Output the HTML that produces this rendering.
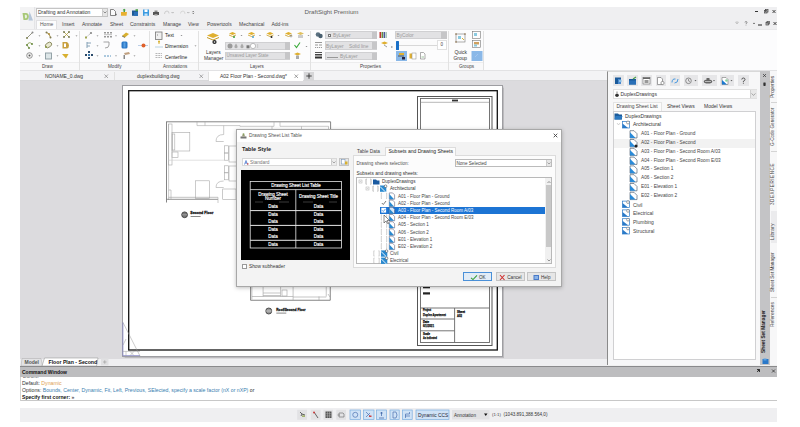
<!DOCTYPE html>
<html><head><meta charset="utf-8">
<style>
*{margin:0;padding:0;box-sizing:border-box}
html,body{width:800px;height:427px;overflow:hidden;background:#fff;font-family:"Liberation Sans",sans-serif;color:#222}
.a{position:absolute}
#app{position:absolute;left:20px;top:7px;width:757px;height:415px;background:#f0f0f0;overflow:hidden}
.t{position:absolute;white-space:nowrap;font-size:6px;line-height:1}
</style></head><body>
<div id="app"></div>

<!-- ===== RIBBON ===== -->
<div class="a" style="left:20px;top:28.5px;width:757px;height:42px;background:#fcfcfd;border-top:1px solid #e8e8ea"></div>
<div class="a" style="left:20px;top:62px;width:464px;height:8px;background:#f9f9fa;border-top:1px solid #ededee"></div>
<div class="a" style="left:20px;top:70px;width:757px;height:1px;background:#e2e2e4"></div>
<!-- panel separators -->
<div class="a" style="left:79px;top:31px;width:1px;height:39px;background:#e2e2e2"></div>
<div class="a" style="left:149px;top:31px;width:1px;height:39px;background:#e2e2e2"></div>
<div class="a" style="left:198px;top:31px;width:1px;height:39px;background:#e2e2e2"></div>
<div class="a" style="left:310px;top:31px;width:1px;height:39px;background:#e2e2e2"></div>
<div class="a" style="left:448px;top:31px;width:1px;height:39px;background:#e2e2e2"></div>
<div class="a" style="left:483px;top:31px;width:1px;height:39px;background:#e2e2e2"></div>
<!-- panel labels -->
<div class="t" style="left:42px;top:65.4px;font-size:4.6px;color:#444">Draw</div>
<div class="t" style="left:108px;top:65.4px;font-size:4.6px;color:#444">Modify</div>
<div class="t" style="left:163px;top:65.4px;font-size:4.6px;color:#444">Annotations</div>
<div class="t" style="left:250px;top:65.4px;font-size:4.6px;color:#444">Layers</div>
<div class="t" style="left:360px;top:65.4px;font-size:4.6px;color:#444">Properties</div>
<div class="t" style="left:459px;top:65.4px;font-size:4.6px;color:#444">Groups</div>
<!-- draw icons -->
<svg class="a" style="left:20px;top:30px" width="464" height="32" viewBox="0 0 464 32">
 <g fill="#777">
  <path d="M18.5 5.5 L19.5 6.5 L20.5 5.5Z"/><path d="M36.5 5.5 L37.5 6.5 L38.5 5.5Z"/><path d="M55.5 5.5 L56.5 6.5 L57.5 5.5Z"/>
  <path d="M18.5 15.5 L19.5 16.5 L20.5 15.5Z"/><path d="M36.5 15.5 L37.5 16.5 L38.5 15.5Z"/>
  <path d="M18.5 25.5 L19.5 26.5 L20.5 25.5Z"/><path d="M36.5 25.5 L37.5 26.5 L38.5 25.5Z"/>
 </g>
 <!-- line -->
 <path d="M7 8 L12.5 2.5" stroke="#8a8a78" stroke-width=".9"/>
 <circle cx="7" cy="8" r="1" fill="#7c8050"/><circle cx="12.5" cy="2.5" r="1" fill="#888"/>
 <!-- polyline -->
 <path d="M26.5 2.5 L29 4 L30.5 7.5" stroke="#a08a40" stroke-width=".9" fill="none"/>
 <circle cx="26.5" cy="2.5" r="1" fill="#807a50"/><circle cx="29" cy="4" r="1" fill="#b09040"/><circle cx="30.5" cy="7.5" r="1" fill="#807a50"/>
 <!-- x points -->
 <path d="M44 2 L49 7 M49 2 L44 7" stroke="#b0a040" stroke-width=".8"/>
 <circle cx="44" cy="2" r=".9" fill="#6a7040"/><circle cx="49" cy="2" r=".9" fill="#6a7040"/><circle cx="44" cy="7" r=".9" fill="#6a7040"/><circle cx="49" cy="7" r=".9" fill="#6a7040"/>
 <!-- arc -->
 <path d="M7 15 Q9 11 12 14" stroke="#88a050" stroke-width=".9" fill="none"/>
 <path d="M7 15 L9 18" stroke="#88a050" stroke-width=".9"/>
 <circle cx="7" cy="15" r="1" fill="#6a8a40"/><circle cx="12" cy="14" r="1" fill="#6a8a40"/><circle cx="9" cy="18" r="1" fill="#6a8a40"/>
 <!-- ellipse -->
 <ellipse cx="28.5" cy="15" rx="3.5" ry="2.3" transform="rotate(-35 28.5 15)" stroke="#8a8a60" stroke-width=".9" fill="#e8e8d0"/>
 <circle cx="26" cy="17" r="1" fill="#8a9a40"/>
 <!-- hatch -->
 <path d="M42.5 12 L47 12 Q49 13 49 15.5 Q49 18 47 18.5 L42.5 18.5 Z" fill="#c8a040"/>
 <rect x="44" y="13.5" width="2" height="3.5" fill="#fff"/>
 <!-- circle -->
 <circle cx="9.5" cy="25.5" r="2.8" stroke="#888" stroke-width=".9" fill="#f4f4f4"/>
 <circle cx="9.5" cy="25.5" r="1" fill="#555"/>
 <!-- rect -->
 <rect x="25.5" y="23" width="6" height="6" stroke="#8a9aa0" stroke-width=".9" fill="#dde6e8"/>
 <!-- triangle -->
 <path d="M42 24 L48.5 24 L46 28.5 Z" fill="#d8b030"/>
</svg>
<!-- modify icons -->
<svg class="a" style="left:80px;top:30px" width="70" height="32" viewBox="0 0 70 32">
 <g fill="#777">
  <path d="M16.5 5.5 L17.5 6.5 L18.5 5.5Z"/><path d="M35 5.5 L36 6.5 L37 5.5Z"/><path d="M53.5 5.5 L54.5 6.5 L55.5 5.5Z"/>
  <path d="M16.5 15.5 L17.5 16.5 L18.5 15.5Z"/>
  <path d="M16.5 25.5 L17.5 26.5 L18.5 25.5Z"/><path d="M35 25.5 L36 26.5 L37 25.5Z"/><path d="M53.5 25.5 L54.5 26.5 L55.5 25.5Z"/>
 </g>
 <rect x="5" y="6.5" width="2" height="2" fill="#a0a850"/>
 <path d="M6.5 7 L11 3" stroke="#888" stroke-width=".7" stroke-dasharray="1 .7"/>
 <circle cx="11" cy="3" r="1.1" fill="#888"/>
 <g fill="#999"><rect x="24" y="2" width="2" height="1.5"/><rect x="27" y="2" width="2" height="1.5"/><rect x="30" y="2" width="2" height="1.5"/>
 <rect x="24" y="4.5" width="8" height=".6"/><rect x="24" y="6" width="2" height="1.5"/><rect x="27" y="6" width="2" height="1.5"/><rect x="30" y="6" width="2" height="1.5"/></g>
 <path d="M42 6 L46 2.5 L49 4 L45 7.5 Z" fill="#d8b030"/><path d="M42 6 L45 7.5" stroke="#555" stroke-width=".7"/>
 <!-- row2 -->
 <path d="M7 12 L7 18 M7 13 L11 13 M7 16 L10 16" stroke="#7a9ab0" stroke-width=".9"/>
 <path d="M23.5 12 L29 12 L29 15 Q29 18 25 18" stroke="#999" stroke-width=".9" fill="none"/>
 <rect x="41.5" y="11.5" width="6" height="7" rx="1.5" fill="#2a78c8"/>
 <rect x="43.5" y="12.5" width="2" height="5" fill="#5aa0e0"/>
 <path d="M58 15.5 L68 15.5" stroke="#7aa0d0" stroke-width=".5"/>
 <circle cx="63.5" cy="15.5" r="2" fill="#e0602a"/>
 <!-- row3 -->
 <g fill="#2a4a6a"><rect x="8" y="21" width="2" height="2"/><rect x="5" y="24" width="2" height="2"/><rect x="11" y="24" width="2" height="2"/><rect x="8" y="27" width="2" height="2"/><rect x="8" y="24" width="2" height="2" fill="#3a7ab0"/></g>
 <path d="M24 26 L31 26" stroke="#4a8ab8" stroke-width=".9" stroke-dasharray="2 1"/>
 <path d="M44 23 L49 22 L50 24 L45 25 Z" fill="#c0a080"/><rect x="43.5" y="25" width="1.5" height="4" fill="#888"/>
</svg>
<!-- annotations -->
<svg class="a" style="left:150px;top:30px" width="50" height="32" viewBox="0 0 50 32">
 <rect x="5.5" y="2" width="6.5" height="7.5" stroke="#777" stroke-width=".8" fill="#f0f0f0"/>
 <path d="M7.5 4 L7.5 6" stroke="#888" stroke-width=".5"/>
 <path d="M30.5 5 L31.5 6 L32.5 5Z" fill="#777"/>
 <path d="M8.5 11 L9.5 11 L9.5 14 L8.5 14Z" fill="#d8b030"/><circle cx="9" cy="11.5" r="1" fill="#d8b030"/>
 <path d="M5.5 17 L12.5 17" stroke="#5a9ab8" stroke-width=".8" stroke-dasharray="1 1"/>
 <path d="M44.5 15.5 L45.5 16.5 L46.5 15.5Z" fill="#777"/>
 <path d="M5.5 23.5 L12 23.5 M5.5 25.5 L12 25.5 M5.5 27.5 L12 27.5" stroke="#999" stroke-width=".7" stroke-dasharray="2 .8"/>
</svg>
<div class="t" style="left:165px;top:34px;font-size:4.9px;color:#222">Text</div>
<div class="t" style="left:165px;top:45px;font-size:4.9px;color:#222">Dimension</div>
<div class="t" style="left:165px;top:55.6px;font-size:4.9px;color:#222">Centerline</div>
<!-- layer panel -->
<svg class="a" style="left:199px;top:30px" width="112" height="32" viewBox="0 0 112 32">
 <path d="M8 5.5 L14 3 L20 5.5 L14 8Z" fill="#e0b030"/><path d="M8 7.5 L14 10 L20 7.5" stroke="#c89a20" stroke-width="1" fill="none"/>
 <circle cx="15.5" cy="12" r="2.1" fill="#222"/><path d="M14.5 12 L16.5 12 M15.5 11 L15.5 13" stroke="#fff" stroke-width=".5"/>
 <g>
 <path d="M30 3.5 L33.5 2 L37 3.5 L33.5 5Z" fill="#e0b030"/><path d="M30 5 L33.5 6.5 L37 5" stroke="#c89a20" stroke-width=".8" fill="none"/><circle cx="35" cy="7" r="1" fill="#3a9a3a"/>
 <path d="M41.5 5 L42.5 6 L43.5 5Z" fill="#777"/>
 <path d="M49 3.5 L52.5 2 L56 3.5 L52.5 5Z" fill="#e0b030"/><path d="M49 5 L52.5 6.5 L56 5" stroke="#c89a20" stroke-width=".8" fill="none"/><circle cx="54" cy="7" r="1" fill="#4aa0d0"/>
 <path d="M60 5 L61 6 L62 5Z" fill="#777"/>
 <path d="M67.5 3.5 L71 2 L74.5 3.5 L71 5Z" fill="#e0b030"/><path d="M67.5 5 L71 6.5 L74.5 5" stroke="#c89a20" stroke-width=".8" fill="none"/><circle cx="72.5" cy="7" r="1" fill="#222"/>
 <path d="M78.5 5 L79.5 6 L80.5 5Z" fill="#777"/>
 <path d="M86 3.5 L89.5 2 L93 3.5 L89.5 5Z" fill="#e0b030"/><path d="M86 5 L89.5 6.5 L93 5" stroke="#c89a20" stroke-width=".8" fill="none"/><circle cx="92" cy="6" r="1" fill="none" stroke="#666" stroke-width=".5"/>
 <path d="M98 3.5 L101.5 2 L105 3.5 L101.5 5Z" fill="#e0c060"/><rect x="99" y="5" width="5" height="3" fill="#ccc"/>
 <path d="M108.5 5 L109.5 6 L110.5 5Z" fill="#777"/>
 </g>
 <path d="M95.5 15 L97.5 17.5 L101 12.5" stroke="#3aaa3a" stroke-width="1.1" fill="none"/>
 <path d="M106.5 16 L107.5 17 L108.5 16Z" fill="#777"/>
 <path d="M95 24 L98.5 22.5 L102 24 L98.5 25.5Z" fill="#e0b030"/><rect x="97" y="25.5" width="3" height="3.5" fill="#aaa"/>
</svg>
<div class="t" style="left:206px;top:50.8px;font-size:4.9px;color:#333">Layers</div>
<div class="t" style="left:204px;top:56.8px;font-size:4.9px;color:#333">Manager</div>
<div class="a" style="left:225px;top:41.5px;width:65px;height:8.5px;background:#e2e2e4;border:1px solid #d0d0d2"></div>
<div class="a" style="left:284.5px;top:42px;width:5px;height:7.5px;background:#c6c6c8"></div>
<svg class="a" style="left:226px;top:42px" width="40" height="8" viewBox="0 0 40 8">
 <circle cx="4" cy="4" r="2.5" fill="#9a9a9a"/>
 <path d="M10 1.5 Q12 4 11.5 5.5 Q10 7 8.5 5.5 Q8 4 10 1.5Z" fill="#aaa"/>
 <path d="M16 1.5 Q18 4 17.5 5.5 Q16 7 14.5 5.5 Q14 4 16 1.5Z" fill="#aaa"/>
 <rect x="20.5" y="3.3" width="3" height="3" fill="#777"/>
 <circle cx="27" cy="4" r="2.6" fill="#fff" stroke="#888" stroke-width=".5"/>
 <rect x="31" y="2" width="1.2" height="4" fill="#ccc"/>
</svg>
<div class="a" style="left:225px;top:51.7px;width:65px;height:8.3px;background:#e2e2e4;border:1px solid #d0d0d2"></div>
<div class="a" style="left:284.5px;top:52.2px;width:5px;height:7.3px;background:#c6c6c8"></div>
<div class="t" style="left:226.5px;top:54.1px;font-size:4.5px;color:#999">Unsaved Layer State</div>
<!-- properties -->
<svg class="a" style="left:311px;top:30px" width="138" height="32" viewBox="0 0 138 32">
 <circle cx="7" cy="4.5" r="2.3" fill="#5a7080"/><circle cx="9.5" cy="6" r="2.2" fill="#4a6070"/>
 <path d="M4 12.5 L11 12.5" stroke="#555" stroke-width=".6"/><path d="M4 15 L11 15" stroke="#555" stroke-width=".6" stroke-dasharray="3 1"/><path d="M4 17.5 L11 17.5" stroke="#555" stroke-width=".6" stroke-dasharray="1.2 .8"/>
 <rect x="4" y="22" width="7" height="1" fill="#555"/><rect x="4" y="24" width="7" height="1.5" fill="#444"/><rect x="4" y="26.5" width="7" height="2" fill="#333"/>
 <rect x="68.5" y="2" width="1.5" height="6" fill="#c03030"/><rect x="70.5" y="2" width="1.5" height="6" fill="#6a8a40"/><rect x="72.5" y="2" width="1.5" height="6" fill="#4a5a9a"/><rect x="74.5" y="2" width="1.2" height="6" fill="#8ab0a0"/>
 <path d="M70 13 L73.5 11.5 L77 13 L73.5 14.5Z" fill="#e0b030"/><path d="M73 15 L76 17" stroke="#777" stroke-width=".7"/>
 <path d="M80 17 L81.5 17" stroke="#444" stroke-width=".8"/>
</svg>
<div class="a" style="left:325px;top:31.3px;width:52px;height:8px;background:#e2e2e4;border:1px solid #d0d0d2"></div>
<div class="a" style="left:372px;top:31.8px;width:4.5px;height:7px;background:#c6c6c8"></div>
<div class="a" style="left:328px;top:33.6px;width:3px;height:3px;border:.6px solid #777;background:#fff"></div>
<div class="t" style="left:333px;top:33.9px;font-size:4.8px;color:#9a9a9a">ByLayer</div>
<div class="a" style="left:325px;top:41.2px;width:52px;height:8.5px;background:#e2e2e4;border:1px solid #d0d0d2"></div>
<div class="a" style="left:372px;top:41.7px;width:4.5px;height:7.5px;background:#c6c6c8"></div>
<div class="t" style="left:326px;top:44.6px;font-size:4.8px;color:#9a9a9a">ByLayer&nbsp;&nbsp;&nbsp;&nbsp;Solid line</div>
<div class="a" style="left:325px;top:52px;width:52px;height:8.2px;background:#e2e2e4;border:1px solid #d0d0d2"></div>
<div class="a" style="left:372px;top:52.5px;width:4.5px;height:7.2px;background:#c6c6c8"></div>
<div class="a" style="left:327px;top:56.5px;width:11px;height:.6px;background:#999"></div>
<div class="t" style="left:340px;top:55.1px;font-size:4.8px;color:#9a9a9a">ByLayer</div>
<div class="a" style="left:395px;top:31.3px;width:52px;height:8.2px;background:#e2e2e4;border:1px solid #d0d0d2"></div>
<div class="a" style="left:441px;top:31.8px;width:5.5px;height:7.2px;background:#c6c6c8"></div>
<div class="t" style="left:396.5px;top:34px;font-size:4.8px;color:#9a9a9a">ByColor</div>
<div class="a" style="left:395px;top:40.5px;width:43px;height:9px;background:#fbfbfb"></div>
<div class="a" style="left:397px;top:44.5px;width:40px;height:1px;background:#d8d8d8"></div>
<div class="a" style="left:395.5px;top:41px;width:3.5px;height:8.5px;background:#1a70c8;border-radius:.5px"></div>
<div class="a" style="left:437px;top:40px;width:9.5px;height:10px;background:#fff;border:1px solid #e0e0e0"></div>
<div class="t" style="left:440.5px;top:43.2px;font-size:4.5px;color:#444">0</div>
<div class="a" style="left:396px;top:51px;width:11px;height:10px;background:#8ab8e8"></div>
<svg class="a" style="left:396px;top:51px" width="36" height="10" viewBox="0 0 36 10">
 <rect x="3" y="2" width="5" height="2" fill="#e0b030"/><rect x="2" y="4.5" width="6" height="1" fill="#555"/><rect x="6" y="6" width="3" height="2.5" fill="#224"/>
 <rect x="13.5" y="2.5" width="2.5" height="5" fill="#e0b030"/><rect x="16" y="2" width="4" height="6" fill="#fff" stroke="#888" stroke-width=".5"/>
 <path d="M24.5 1.5 L27.5 1.5 L29 3 L29 8 L24.5 8Z" fill="#fff" stroke="#777" stroke-width=".6"/><path d="M25.5 6 L28 6" stroke="#5a9a5a" stroke-width=".6"/>
</svg>
<!-- groups -->
<svg class="a" style="left:449px;top:30px" width="36" height="32" viewBox="0 0 36 32">
 <rect x="7" y="4" width="9" height="8" stroke="#777" stroke-width=".6" fill="none"/>
 <circle cx="7" cy="4" r=".8" fill="#8a6a40"/><circle cx="16" cy="4" r=".8" fill="#8a6a40"/><circle cx="7" cy="12" r=".8" fill="#8a6a40"/>
 <rect x="9" y="6" width="3" height="3" fill="#8acae0"/><path d="M13 8 L15 10" stroke="#d8b030" stroke-width="1"/>
 <rect x="23.5" y="1.5" width="8" height="7" stroke="#777" stroke-width=".6" fill="none"/><rect x="25" y="3" width="3" height="3" fill="#8acae0"/>
 <rect x="23.5" y="10.5" width="8" height="7" stroke="#777" stroke-width=".6" fill="none"/><rect x="25" y="12" width="5" height="2.5" fill="#d0a060"/><rect x="25" y="14.5" width="3" height="2" fill="#8acae0"/>
 <rect x="22.5" y="21" width="11" height="10" fill="#8ab8e8"/>
 <path d="M26 27 L29 24" stroke="#aac8f0" stroke-width=".8"/>
</svg>
<div class="t" style="left:454.5px;top:51px;font-size:4.9px;color:#333">Quick</div>
<div class="t" style="left:453.5px;top:57.2px;font-size:4.9px;color:#333">Group</div>

<!-- ===== DOC TABS ===== -->
<div class="a" style="left:20px;top:71px;width:587px;height:10px;background:#f3f3f5;border-bottom:1px solid #d8d8da"></div>
<div class="a" style="left:114px;top:72px;width:1px;height:8px;background:#e0e0e0"></div>
<div class="a" style="left:208px;top:72px;width:1px;height:8px;background:#e0e0e0"></div>
<div class="t" style="left:45px;top:73.7px;font-size:5px;color:#333">NONAME_0.dwg</div>
<div class="t" style="left:137px;top:73.7px;font-size:5px;color:#333">duplexbuilding.dwg</div>
<svg class="a" style="left:104px;top:74px" width="5" height="5"><path d="M.5 .5 L4 4 M4 .5 L.5 4" stroke="#777" stroke-width=".6"/></svg>
<svg class="a" style="left:199px;top:74px" width="5" height="5"><path d="M.5 .5 L4 4 M4 .5 L.5 4" stroke="#777" stroke-width=".6"/></svg>
<div class="a" style="left:209px;top:71px;width:94px;height:11px;background:#fff"></div>
<div class="t" style="left:220px;top:73.7px;font-size:5px;color:#333">A02 Floor Plan - Second.dwg*</div>
<svg class="a" style="left:294px;top:74px" width="5" height="5"><path d="M.5 .5 L4 4 M4 .5 L.5 4" stroke="#666" stroke-width=".6"/></svg>
<div class="a" style="left:304.4px;top:71.5px;width:10px;height:9.5px;background:#d6d6d8"></div>
<svg class="a" style="left:306.4px;top:73.3px" width="6" height="6"><path d="M3 .3 L3 5.7 M.3 3 L5.7 3" stroke="#333" stroke-width=".9"/></svg>

<!-- canvas -->
<div class="a" style="left:20px;top:81px;width:587px;height:277.5px;background:#dcdbde"></div>
<!-- ===== PAPER ===== -->
<div class="a" style="left:122px;top:85px;width:381px;height:271.5px;background:#fff;border:1.2px solid #9e9ea2;box-shadow:.5px .5px 1px rgba(0,0,0,.15)"></div>
<svg class="a" style="left:0;top:0" width="800" height="427" viewBox="0 0 800 427">
 <rect x="128.7" y="90.7" width="368.6" height="259.3" fill="none" stroke="#111" stroke-width="1.3"/>
 <!-- title block -->
 <rect x="417.5" y="96.5" width="74.5" height="249" fill="none" stroke="#555" stroke-width="1"/>
 <rect x="420.5" y="98.5" width="69" height="244" fill="none" stroke="#666" stroke-width=".9"/>
 <path d="M420.5 102.3 L489.5 102.3" stroke="#888" stroke-width=".6"/>
 <rect x="452" y="99.6" width="6" height="1.8" fill="#333"/>
 <path d="M420.5 308 L489.5 308" stroke="#666" stroke-width=".9"/>
 <path d="M454.6 308 L454.6 342.5" stroke="#666" stroke-width=".9"/>
 <path d="M420.5 319 L454.6 319 M420.5 330.8 L454.6 330.8" stroke="#666" stroke-width=".9"/>
 <rect x="423" y="286.3" width="7" height="2" fill="#222"/>
 <rect x="423" y="292.3" width="7" height="2.2" fill="#222"/>
 <g fill="#111" stroke="#111" stroke-width=".25" font-family="Liberation Sans" font-weight="bold">
  <text x="423" y="311.3" font-size="2.6" textLength="8" lengthAdjust="spacingAndGlyphs">Project</text>
  <text x="423" y="316" font-size="3.4" textLength="23" lengthAdjust="spacingAndGlyphs">Duplex Apartment</text>
  <text x="423" y="322.5" font-size="2.6" textLength="6" lengthAdjust="spacingAndGlyphs">Date</text>
  <text x="423" y="327.1" font-size="3.2" textLength="11" lengthAdjust="spacingAndGlyphs">6/1/2021</text>
  <text x="423" y="334.8" font-size="2.6" textLength="7" lengthAdjust="spacingAndGlyphs">Scale</text>
  <text x="423" y="339.4" font-size="3.2" textLength="14" lengthAdjust="spacingAndGlyphs">As indicated</text>
  <text x="457" y="312.8" font-size="2.6" textLength="8" lengthAdjust="spacingAndGlyphs">Sheet</text>
  <text x="457" y="317.1" font-size="3.2" textLength="5" lengthAdjust="spacingAndGlyphs">A02</text>
 </g>
 <!-- floor plan -->
 <g fill="none" stroke="#a8a8a8" stroke-width=".6">
  <path d="M166.5 121.8 L330.6 121.8 L330.6 130" stroke="#777" stroke-width=".9"/><path d="M240 126.3 L274 126.3 L274 122 M280 122 L280 126.3 L328.5 126.3 L328.5 130 M272 126.3 L272 130 M301.5 126.3 L301.5 130"/>
  <path d="M166.5 121.5 L166.5 202.5" stroke="#777" stroke-width=".9"/>
  <path d="M168.6 124 L168.6 200"/>
  <path d="M197 121.5 L197 125.6 L205 125.6 L205 121.5"/>
  <path d="M205 125.6 L240 125.6 L240 126.3"/>
  <rect x="168.6" y="124" width="3.4" height="41"/>
  <rect x="172" y="132.4" width="17.8" height="18.6"/>
  <rect x="172.2" y="134" width="2.6" height="16"/>
  <rect x="172" y="152" width="6" height="5.5"/>
  <path d="M168.6 160.2 L224 160.2" stroke="#ccc"/>
  <path d="M223.7 125.6 L223.7 134.5"/>
  <path d="M223.7 134.5 Q216 134.5 216 141.5 L223.7 141.5"/>
  <rect x="224.4" y="145.8" width="4.1" height="7.2"/><rect x="224.4" y="153" width="4.1" height="7.2"/>
  <rect x="229" y="146" width="8" height="16"/>
  <rect x="224.4" y="165.8" width="4.1" height="7"/><rect x="224.4" y="172.8" width="4.1" height="7"/>
  <rect x="229" y="166" width="8" height="15"/>
  <path d="M223.7 181 Q216 181 216 187.5 L223.7 187.5"/>
  <rect x="195.3" y="180.8" width="14" height="17.5"/>
  <path d="M168.6 197.3 L218 197.3" stroke="#999"/>
  <path d="M166.5 199.3 L218 199.3" stroke="#777" stroke-width=".8"/>
  <path d="M218 197.3 L218 203"/>
  <rect x="222.7" y="189" width="13.3" height="10.3"/>
  <path d="M168.6 190 L171 190 L171 200"/>
 </g>
 <!-- second floor label -->
 <circle cx="184.6" cy="214.8" r="2.9" fill="#777" stroke="#333" stroke-width=".8"/>
 <path d="M182 214.8 L187.2 214.8" stroke="#ddd" stroke-width=".4"/>
 <text x="190.3" y="214" font-family="Liberation Sans" font-weight="bold" font-size="4.4" fill="#111" stroke="#111" stroke-width=".3" textLength="23" lengthAdjust="spacingAndGlyphs">Second Floor</text>
 <rect x="190.6" y="216" width="10" height="1" fill="#888"/>
 <!-- lower plan piece -->
 <g fill="none" stroke="#a0a0a0" stroke-width=".6">
  <path d="M250.6 286 L250.6 300.25 L330.25 300.25 L330.25 286" stroke="#666" stroke-width=".8"/>
  <path d="M251.9 286 L251.9 299.5"/>
  <path d="M263.1 286 L263.1 296.5 M280.6 286 L280.6 296.5 M293.1 286 L293.1 300.25 M326.25 286 L326.25 296.5"/>
  <path d="M263.1 293 L280.6 293 M263.1 295.5 L280.6 295.5 M251.9 296.5 L293.1 296.5 M293.1 297 L326.25 297"/>
  <rect x="282" y="290" width="5" height="6"/>
  <path d="M319 296.5 L319 300.25 M328 294 L330 297"/>
 </g>
 <circle cx="268.75" cy="311" r="3" fill="#999" stroke="#333" stroke-width=".8"/>
 <path d="M265.5 311 L272 311" stroke="#eee" stroke-width=".5"/>
 <text x="276.25" y="310.6" font-family="Liberation Sans" font-weight="bold" font-size="4.4" fill="#111" stroke="#111" stroke-width=".3" textLength="29.4" lengthAdjust="spacingAndGlyphs">Roof/Second Floor</text>
 <rect x="276.3" y="312.6" width="10" height="1" fill="#888"/>
 <!-- UCS -->
 <g stroke="#8888c8" stroke-width=".8" fill="none">
  <path d="M122.9 322.4 L122.9 355.6 L140 355.6"/>
 </g>
 <g stroke="#999" stroke-width=".5" fill="none">
  <path d="M123 322.5 L140 356"/>
  <path d="M122.9 351.4 L140 351.4"/>
  <path d="M123 345 L126 339"/>
  <path d="M126 351.4 L126 355.6 M130 351.4 L134 355.6 M134 351.4 L130 355.6"/>
 </g>
</svg>

<!-- ===== RIGHT PANEL ===== -->
<div class="a" style="left:606.5px;top:71px;width:154px;height:294px;background:#f7f7f8;border-left:1px solid #8a8a8a;border-top:1px solid #d8d8d8"></div>
<div class="a" style="left:760.3px;top:71px;width:10px;height:294px;background:#c4c4c6"></div>
<div class="a" style="left:770.2px;top:71px;width:6.8px;height:294px;background:#f7f7f8"></div>
<!-- icon buttons -->
<div class="a" style="left:612.7px;top:75.1px;width:11.3px;height:11.3px;background:#e6e6e8"></div>
<div class="a" style="left:627px;top:75.1px;width:10.7px;height:11.3px;background:#e6e6e8"></div>
<div class="a" style="left:641.2px;top:75.1px;width:10.8px;height:11.3px;background:#e6e6e8"></div>
<div class="a" style="left:655.5px;top:75.1px;width:10.7px;height:11.3px;background:#e6e6e8"></div>
<div class="a" style="left:669.7px;top:75.1px;width:10.7px;height:11.3px;background:#e6e6e8"></div>
<div class="a" style="left:684px;top:75.1px;width:14.3px;height:11.3px;background:#e6e6e8"></div>
<div class="a" style="left:701.9px;top:75.1px;width:14.8px;height:11.3px;background:#e6e6e8"></div>
<div class="a" style="left:719.7px;top:75.1px;width:14.8px;height:11.3px;background:#e6e6e8"></div>
<div class="a" style="left:738px;top:75.1px;width:10.8px;height:11.3px;background:#e6e6e8"></div>
<svg class="a" style="left:606px;top:71px" width="171" height="294" viewBox="606 71 171 294">
 <!-- icons -->
 <rect x="615" y="77.5" width="6" height="6.5" fill="#1a5a9a"/><path d="M618 79 L621 79 L621 84 L618 84Z" fill="#4a8ad0"/><rect x="619" y="80" width="2.5" height="2" fill="#8ac0e8"/>
 <rect x="629" y="79" width="7" height="5.5" fill="#1a5a9a"/><rect x="629" y="80.5" width="7" height="4" fill="#2a70b8"/><path d="M633 79 L636 77" stroke="#4aa04a" stroke-width="1.2"/>
 <rect x="643" y="77.5" width="7" height="6.5" fill="#fff" stroke="#666" stroke-width=".6"/><rect x="643" y="77.5" width="7" height="1.5" fill="#666"/><rect x="644.5" y="80" width="4" height="3" fill="#999"/>
 <path d="M657.5 77.5 L661 77.5 L662.5 79 L662.5 84.5 L657.5 84.5Z" fill="#fff" stroke="#666" stroke-width=".6"/><circle cx="662.5" cy="83" r="1.6" fill="#fff" stroke="#666" stroke-width=".6"/>
 <path d="M672 82.5 Q672 78.5 675.5 79 M678 79 Q678 83 674.5 83" stroke="#4a9ae0" stroke-width="1" fill="none"/>
 <circle cx="688.5" cy="80.8" r="2.8" fill="none" stroke="#666" stroke-width=".7"/><path d="M688.5 79 L688.5 81 L690 81.5" stroke="#666" stroke-width=".6" fill="none"/>
 <path d="M694.5 80.3 L695.5 81.3 L696.5 80.3Z" fill="#333"/>
 <ellipse cx="708" cy="81.5" rx="4.2" ry="2" fill="#666"/><rect x="706.5" y="78" width="3" height="2.5" fill="#666"/><rect x="705" y="81" width="6" height=".7" fill="#ddd"/>
 <path d="M713 80.3 L714 81.3 L715 80.3Z" fill="#333"/>
 <path d="M722 77.5 L726 77.5 L728 79.5 L728 84.5 L722 84.5Z" fill="#fff" stroke="#777" stroke-width=".6"/><path d="M722 84.5 L722 80 L727 84.5Z" fill="#1a78d0"/><circle cx="726.5" cy="80.5" r="1.3" fill="#8ad0a0"/>
 <path d="M730.5 80.3 L731.5 81.3 L732.5 80.3Z" fill="#333"/>
 <path d="M741.8 79.5 Q741.8 78 743.4 78 Q745 78 745 79.5 Q745 80.7 743.4 81.2 L743.4 82.3 M743.4 83.3 L743.4 84" stroke="#333" stroke-width=".8" fill="none"/>
 <!-- pin/close -->
 <path d="M763 74 L766 77 M766 74 L763 77" stroke="#333" stroke-width=".7"/>
 <rect x="763.5" y="82.5" width="2" height="3.5" fill="#333"/><path d="M763 84 L766 84" stroke="#333" stroke-width=".6"/>
</svg>
<!-- combo -->
<div class="a" style="left:612.5px;top:89.4px;width:144px;height:9.5px;background:#fff;border:1px solid #e0e0e0"></div>
<div class="a" style="left:749.5px;top:90px;width:7px;height:8.3px;background:#e8e8e8;border-left:1px solid #d0d0d0"></div>
<svg class="a" style="left:751px;top:92.5px" width="5" height="3"><path d="M.5 .5 L2.5 2.3 L4.5 .5" stroke="#777" stroke-width=".6" fill="none"/></svg>
<svg class="a" style="left:614.5px;top:90.5px" width="4" height="7" viewBox="0 0 4 7"><path d="M2 .5 L2 2" stroke="#333" stroke-width=".6"/><circle cx="2" cy="4.3" r="1.8" fill="#333"/></svg>
<div class="t" style="left:620.5px;top:92px;font-size:5px;color:#333">DuplexDrawings</div>
<!-- tabs -->
<div class="a" style="left:612.5px;top:101.5px;width:49px;height:9.5px;background:#fbfbfb;border:1px solid #e4e4e4;border-bottom:none"></div>
<div class="t" style="left:616.5px;top:104.8px;font-size:4.9px;color:#444">Drawing Sheet List</div>
<div class="t" style="left:667px;top:104px;font-size:5px;color:#333">Sheet Views</div>
<div class="t" style="left:704px;top:104px;font-size:5px;color:#333">Model Views</div>
<div class="a" style="left:612.5px;top:110.8px;width:143px;height:249px;background:#fff;border:1px solid #d0d0d2"></div>
<div class="a" style="left:613.5px;top:139px;width:141px;height:8.6px;background:#f2f2f2"></div>
<svg class="a" style="left:606px;top:108px" width="150" height="130" viewBox="606 108 150 130">
 <path d="M614.5 113.5 L618 113.5 L619 114.5 L622 114.5 L622 119.5 L614.5 119.5Z" fill="#1a5a9a"/><path d="M615.5 116 L622.5 116 L621.5 119.5 L614.5 119.5Z" fill="#2a78c0"/>
 <path d="M617 123 L618.5 125 L620 123" stroke="#aaa" stroke-width=".5" fill="none"/>
 <g>
  <rect x="622.5" y="121.5" width="7" height="6.5" fill="#fff" stroke="#2a7ac8" stroke-width=".7"/><path d="M622.5 128 L622.5 123.5 L628 128Z" fill="#2a7ac8"/><circle cx="628" cy="122.5" r="1.5" fill="#fff" stroke="#555" stroke-width=".5"/>
 </g>
 <path d="M630 130.7 L634 130.7 L637 133.7 L637 138.0 L630 138.0Z" fill="#fff" stroke="#2a3a50" stroke-width=".55"/>
 <path d="M630 132.3 L635.6 138.0 L630 138.0Z" fill="#2a8ad8"/>
 <path d="M630 139.5 L634 139.5 L637 142.5 L637 146.8 L630 146.8Z" fill="#fff" stroke="#2a3a50" stroke-width=".55"/>
 <path d="M630 141.1 L635.6 146.8 L630 146.8Z" fill="#2a8ad8"/>
 <path d="M630 148.3 L634 148.3 L637 151.3 L637 155.6 L630 155.6Z" fill="#fff" stroke="#2a3a50" stroke-width=".55"/>
 <path d="M630 149.9 L635.6 155.6 L630 155.6Z" fill="#2a8ad8"/>
 <path d="M630 157.1 L634 157.1 L637 160.1 L637 164.4 L630 164.4Z" fill="#fff" stroke="#2a3a50" stroke-width=".55"/>
 <path d="M630 158.7 L635.6 164.4 L630 164.4Z" fill="#2a8ad8"/>
 <path d="M630 165.9 L634 165.9 L637 168.9 L637 173.2 L630 173.2Z" fill="#fff" stroke="#2a3a50" stroke-width=".55"/>
 <path d="M630 167.5 L635.6 173.2 L630 173.2Z" fill="#2a8ad8"/>
 <path d="M630 174.7 L634 174.7 L637 177.7 L637 182.0 L630 182.0Z" fill="#fff" stroke="#2a3a50" stroke-width=".55"/>
 <path d="M630 176.3 L635.6 182.0 L630 182.0Z" fill="#2a8ad8"/>
 <path d="M630 183.5 L634 183.5 L637 186.5 L637 190.8 L630 190.8Z" fill="#fff" stroke="#2a3a50" stroke-width=".55"/>
 <path d="M630 185.1 L635.6 190.8 L630 190.8Z" fill="#2a8ad8"/>
 <path d="M630 192.3 L634 192.3 L637 195.3 L637 199.6 L630 199.6Z" fill="#fff" stroke="#2a3a50" stroke-width=".55"/>
 <path d="M630 193.9 L635.6 199.6 L630 199.6Z" fill="#2a8ad8"/>
 <circle cx="636" cy="146" r="1.5" fill="#222"/>
<g transform="translate(0,1.1)"> <g fill="#fff" stroke="#2a7ac8" stroke-width=".7">
  <rect x="622.5" y="200" width="7" height="6.5"/><rect x="622.5" y="208.8" width="7" height="6.5"/><rect x="622.5" y="217.6" width="7" height="6.5"/><rect x="622.5" y="226.4" width="7" height="6.5"/>
 </g>
 <g fill="#2a7ac8">
  <path d="M622.5 206.5 L622.5 202 L628 206.5Z"/><path d="M622.5 215.3 L622.5 210.8 L628 215.3Z"/><path d="M622.5 224.1 L622.5 219.6 L628 224.1Z"/><path d="M622.5 232.9 L622.5 228.4 L628 232.9Z"/>
 </g>
 <g fill="#fff" stroke="#555" stroke-width=".5"><circle cx="628" cy="201" r="1.4"/><circle cx="628" cy="209.8" r="1.4"/><circle cx="628" cy="218.6" r="1.4"/><circle cx="628" cy="227.4" r="1.4"/></g></g>
</svg>
<div class="t" style="left:625px;top:113.5px;font-size:5px;color:#333">DuplexDrawings</div>
<div class="t" style="left:633px;top:122px;font-size:5px;color:#333">Architectural</div>
<div class="t" style="left:641px;top:132.2px;font-size:4.75px;color:#444">A01 - Floor Plan - Ground</div>
<div class="t" style="left:641px;top:141.0px;font-size:4.75px;color:#444">A02 - Floor Plan - Second</div>
<div class="t" style="left:641px;top:149.8px;font-size:4.75px;color:#444">A03 - Floor Plan - Second Room A/03</div>
<div class="t" style="left:641px;top:158.6px;font-size:4.75px;color:#444">A04 - Floor Plan - Second Room E/03</div>
<div class="t" style="left:641px;top:167.4px;font-size:4.75px;color:#444">A05 - Section 1</div>
<div class="t" style="left:641px;top:176.2px;font-size:4.75px;color:#444">A06 - Section 2</div>
<div class="t" style="left:641px;top:185.0px;font-size:4.75px;color:#444">E01 - Elevation 1</div>
<div class="t" style="left:641px;top:193.8px;font-size:4.75px;color:#444">E02 - Elevation 2</div>
<div class="t" style="left:633px;top:202.6px;font-size:5px;color:#444">Civil</div>
<div class="t" style="left:633px;top:211.4px;font-size:5px;color:#444">Electrical</div>
<div class="t" style="left:633px;top:220.2px;font-size:5px;color:#444">Plumbing</div>
<div class="t" style="left:633px;top:229.0px;font-size:5px;color:#444">Structural</div>
<!-- rotated labels -->
<div class="a" style="left:770.5px;top:101.5px;width:6px;height:.6px;background:#d4d4d4"></div>
<div class="a" style="left:770.5px;top:150.5px;width:6px;height:.6px;background:#d4d4d4"></div>
<div class="a" style="left:770.5px;top:210.6px;width:6.5px;height:32.3px;background:#ebebed"></div>
<div class="a" style="left:770.5px;top:296.8px;width:6px;height:.6px;background:#d4d4d4"></div>
<div class="t" style="left:771.2px;top:98px;font-size:4.9px;color:#444;transform-origin:0 0;transform:rotate(-90deg)">Properties</div>
<div class="t" style="left:771.2px;top:146.2px;font-size:4.63px;color:#444;transform-origin:0 0;transform:rotate(-90deg)">G-Code Generator</div>
<div class="t" style="left:771.2px;top:205px;font-size:4.6px;color:#444;letter-spacing:.55px;transform-origin:0 0;transform:rotate(-90deg)">3DEXPERIENCE</div>
<div class="t" style="left:771.2px;top:240px;font-size:4.6px;color:#444;letter-spacing:.4px;transform-origin:0 0;transform:rotate(-90deg)">Library</div>
<div class="t" style="left:771.2px;top:291.5px;font-size:4.6px;color:#333;transform-origin:0 0;transform:rotate(-90deg)">Sheet Set Manager</div>
<div class="t" style="left:771.2px;top:326.5px;font-size:4.9px;color:#444;transform-origin:0 0;transform:rotate(-90deg)">References</div>
<div class="t" style="left:762.3px;top:353px;font-size:4.8px;color:#222;font-weight:bold;transform-origin:0 0;transform:rotate(-90deg)">Sheet Set Manager</div>
<svg class="a" style="left:761.5px;top:357.5px" width="7" height="7"><rect x=".5" y="1" width="6" height="5" fill="#2a78c8"/><rect x="1.5" y=".5" width="3" height="2" fill="#5aa0e0"/></svg>
<!-- ===== BOTTOM ===== -->
<div class="a" style="left:20px;top:358.5px;width:587px;height:7.5px;background:#efeff1"></div>
<svg class="a" style="left:20px;top:357px" width="100" height="10" viewBox="20 357 100 10">
 <path d="M21 366 L22 358.5 L41 358.5 L42.5 366Z" fill="#e2e2e4" stroke="#aaa" stroke-width=".5"/>
 <path d="M42 366 L44.5 358 L98 358 L96.5 366Z" fill="#fff" stroke="#888" stroke-width=".5"/>
 <path d="M101 358.5 L108.5 358.5 L108.5 365.5 L101 365.5Z" fill="#e0e0e2"/>
 <path d="M103 362 L106.5 362 M104.75 360.25 L104.75 363.75" stroke="#999" stroke-width=".6"/>
</svg>
<div class="t" style="left:24.5px;top:359.7px;font-size:5px;color:#555;font-weight:bold">Model</div>
<div class="t" style="left:48.5px;top:359.6px;font-size:5.2px;color:#111;font-weight:bold">Floor Plan - Second</div>
<div class="a" style="left:20px;top:365.6px;width:757px;height:11px;background:#bdbdbf;border-top:1px solid #8a8a8c"></div>
<div class="t" style="left:22px;top:369.6px;font-size:5px;color:#111;font-weight:bold">Command Window</div>
<svg class="a" style="left:750px;top:368px" width="27" height="8"><path d="M7 1.5 L9.5 1.5 L9.5 4 M7 4 L9.5 1.5" stroke="#222" stroke-width=".8" fill="#222"/><path d="M22 1.5 L25 4.5 M25 1.5 L22 4.5" stroke="#222" stroke-width=".7"/></svg>
<div class="a" style="left:20px;top:376.6px;width:757px;height:24.5px;background:#fff;border-bottom:1px solid #c8c8c8;border-left:1px solid #d4d4d4;overflow:hidden">
 <div class="t" style="left:2px;top:-2.3px;font-size:5.2px;color:#666">ZOOM</div>
</div>
<div class="t" style="left:22px;top:381px;font-size:5.2px;color:#333">Default: <span style="color:#e0a050">Dynamic</span></div>
<div class="t" style="left:22px;top:387.6px;font-size:5.2px;color:#333">Options: <span style="color:#3a80b0">Bounds, Center, Dynamic, Fit, Left, Previous, SElected, specify a scale factor (nX or nXP)</span> or</div>
<div class="t" style="left:22px;top:394.5px;font-size:5.1px;color:#111;font-weight:bold">Specify first corner: <span style="font-weight:normal">»</span></div>
<div class="a" style="left:20px;top:401px;width:757px;height:7px;background:#fff"></div>
<div class="a" style="left:20px;top:408px;width:757px;height:14px;background:#efeff1"></div>
<svg class="a" style="left:296px;top:409px" width="260" height="12" viewBox="296 409 260 12">
 <g fill="#e2e2e4"><rect x="297.2" y="409.8" width="9.8" height="10"/><rect x="310.8" y="409.8" width="9.8" height="10"/><rect x="323.5" y="409.8" width="9.5" height="10"/><rect x="336.3" y="409.8" width="9.7" height="10"/></g>
 <g fill="#cfe2f6" stroke="#7aaee0" stroke-width=".7"><rect x="350" y="410" width="10.5" height="9.6"/><rect x="363.5" y="410" width="10.5" height="9.6"/><rect x="376.5" y="410" width="10" height="9.6"/><rect x="390" y="410" width="9.2" height="9.6"/><rect x="402.5" y="410" width="9.7" height="9.6"/></g>
 <rect x="416" y="410" width="33" height="9.4" fill="#cfe2f6" stroke="#7aaee0" stroke-width=".7"/>
 <rect x="452" y="410" width="37.5" height="9.4" fill="#e2e2e4"/>
 <path d="M484 413.5 L487.5 413.5 L485.75 416Z" fill="#111"/>
 <path d="M300 412 L302 414 L301 416 M302 414 L305 415" stroke="#444" stroke-width=".8" fill="none"/><rect x="302" y="415.5" width="3" height="1.2" fill="#8aa040"/>
 <path d="M314 412 L318 418" stroke="#444" stroke-width=".8"/><circle cx="314" cy="412.5" r=".9" fill="#d03030"/>
 <g fill="#555"><rect x="325.5" y="411.5" width="6" height="6.5"/></g><path d="M325.5 413.7 L331.5 413.7 M325.5 415.9 L331.5 415.9 M327.5 411.5 L327.5 418 M329.5 411.5 L329.5 418" stroke="#ccc" stroke-width=".4"/>
 <path d="M339 413 L343 413 L344 414 L344 417 L339 417Z" fill="none" stroke="#666" stroke-width=".6"/><path d="M337.5 415 L340 415" stroke="#666" stroke-width=".6"/>
 <circle cx="355.25" cy="414.8" r="2.5" fill="none" stroke="#4a70b0" stroke-width=".7"/>
 <path d="M366 412 L371 417 M366 417 L370 413" stroke="#4a70b0" stroke-width=".7"/><rect x="369" y="415.5" width="2.5" height="1.5" fill="#d04040"/>
 <path d="M379 418 L384 418 M381.5 412 L381.5 416" stroke="#4a70b0" stroke-width=".8"/><circle cx="381.5" cy="413" r="1" fill="#4a70b0"/>
 <path d="M393 412 L396 412 L397 415 L396 418 L393 418Z" fill="none" stroke="#4a70b0" stroke-width=".7"/>
 <path d="M405.5 418 L405.5 414 L409.5 414 L409.5 412 M405 416 L410 416" stroke="#4a70b0" stroke-width=".7" fill="none"/>
</svg>
<div class="t" style="left:418px;top:413.6px;font-size:4.8px;color:#223">Dynamic CCS</div>
<div class="t" style="left:454px;top:413.8px;font-size:4.6px;color:#333">Annotation</div>
<div class="t" style="left:492px;top:413px;font-size:4.4px;color:#444">(1:1)</div>
<div class="t" style="left:503.5px;top:413.2px;font-size:4.6px;color:#333">(1043.891,388.564,0)</div>
<!-- ===== DIALOG ===== -->
<div class="a" style="left:236px;top:129px;width:326px;height:157.5px;background:#f3f3f3;border:1px solid #a8a8a8;box-shadow:0 1px 4px rgba(0,0,0,.25)"></div>
<div class="a" style="left:237px;top:130px;width:324px;height:12px;background:#fff"></div>
<svg class="a" style="left:240px;top:132.5px" width="7" height="6" viewBox="0 0 7 6">
 <rect x=".5" y="3.5" width="6" height="2" fill="#777"/><path d="M1.5 3.5 L3.5 1 L5.5 3.5Z" fill="#9a9a7a"/><circle cx="3.5" cy="1.3" r="1" fill="#8aa060"/>
</svg>
<div class="t" style="left:249px;top:133.5px;font-size:4.8px;color:#555">Drawing Sheet List Table</div>
<svg class="a" style="left:552.5px;top:133px" width="5" height="5"><path d="M.7 .7 L4.3 4.3 M4.3 .7 L.7 4.3" stroke="#444" stroke-width=".9"/></svg>
<div class="t" style="left:242px;top:147px;font-size:5.6px;font-weight:bold;color:#222">Table Style</div>
<div class="a" style="left:241.6px;top:157.6px;width:95px;height:8.6px;background:#fff;border:1px solid #d8d8d8"></div>
<div class="a" style="left:330.5px;top:158.5px;width:5.5px;height:6.8px;background:#ececec;border-left:1px solid #ccc"></div>
<svg class="a" style="left:331.5px;top:160.5px" width="4" height="3"><path d="M.5 .5 L2 2 L3.5 .5" stroke="#777" stroke-width=".6" fill="none"/></svg>
<svg class="a" style="left:243.5px;top:159.5px" width="5" height="5" viewBox="0 0 5 5"><path d="M.5 4.5 L2 .5 L3.5 4.5 M1 3 L3 3" stroke="#3a6ac8" stroke-width=".7" fill="none"/><circle cx="3.8" cy="3.9" r=".8" fill="#d05050"/></svg>
<div class="t" style="left:250px;top:160.5px;font-size:4.8px;color:#777">Standard</div>
<div class="a" style="left:339.3px;top:157.6px;width:10px;height:8.8px;background:#e6e6e6;border:1px solid #c4c4c4"></div>
<svg class="a" style="left:341px;top:159px" width="7" height="6" viewBox="0 0 7 6"><rect x=".5" y=".5" width="3.5" height="4.5" fill="#fff" stroke="#6a8ab0" stroke-width=".5"/><rect x="4" y="2.5" width="2.5" height="3" fill="#d8b030"/></svg>
<!-- preview -->
<div class="a" style="left:241.4px;top:170.1px;width:108.2px;height:89.6px;background:#000"></div>
<svg class="a" style="left:241px;top:170px" width="111" height="89" viewBox="0 0 111 89" style="">
 <g stroke="#e8e8e8" stroke-width=".8" fill="none">
  <rect x="9.2" y="11.4" width="91.2" height="66.6"/>
  <path d="M9.2 19.6 L100.4 19.6"/>
  <path d="M54.8 19.6 L54.8 78"/>
  <path d="M9.2 40.6 L100.4 40.6 M9.2 55.4 L100.4 55.4 M9.2 70.3 L100.4 70.3" stroke-width="1"/>
  <path d="M14 32 L22 32 M38 32 L48 32 M62 32 L72 32 M88 32 L96 32" stroke="#777" stroke-width=".5"/>
 </g>
 <g fill="#fff" stroke="#fff" stroke-width=".15" font-family="Liberation Sans" font-size="4.5" text-anchor="middle">
  <text x="55" y="17">Drawing Sheet List Table</text>
  <text x="32" y="25.8">Drawing Sheet</text>
  <text x="32" y="30">Number</text>
  <text x="77.6" y="27.5">Drawing Sheet Title</text>
  <text x="32" y="37.8">Data</text><text x="77.6" y="37.8">Data</text>
  <text x="32" y="45.5">Data</text><text x="77.6" y="45.5">Data</text>
  <text x="32" y="53.2">Data</text><text x="77.6" y="53.2">Data</text>
  <text x="32" y="60.6">Data</text><text x="77.6" y="60.6">Data</text>
  <text x="32" y="68.2">Data</text><text x="77.6" y="68.2">Data</text>
  <text x="32" y="75.6">Data</text><text x="77.6" y="75.6">Data</text>
 </g>
</svg>
<div class="a" style="left:242px;top:264px;width:5px;height:5px;background:#fff;border:1px solid #999"></div>
<div class="t" style="left:249px;top:264.5px;font-size:4.8px;color:#333">Show subheader</div>
<!-- right side tabs -->
<div class="a" style="left:353px;top:154.8px;width:203px;height:113.5px;background:#fcfcfc;border:1px solid #dcdcdc"></div>
<div class="a" style="left:385.4px;top:146.5px;width:70.5px;height:9.5px;background:#fcfcfc;border:1px solid #dcdcdc;border-bottom:none"></div>
<div class="t" style="left:357px;top:150px;font-size:4.8px;color:#444">Table Data</div>
<div class="t" style="left:388.5px;top:149.4px;font-size:5px;color:#222">Subsets and Drawing Sheets</div>
<div class="t" style="left:356.5px;top:162px;font-size:4.6px;color:#555">Drawing sheets selection:</div>
<div class="a" style="left:454.8px;top:158.7px;width:97px;height:8.3px;background:#fff;border:1px solid #bbb"></div>
<div class="a" style="left:545.5px;top:159.5px;width:5.5px;height:6.7px;background:#e6e6e6;border-left:1px solid #ccc"></div>
<svg class="a" style="left:546.5px;top:161.5px" width="4" height="3"><path d="M.5 .5 L2 2 L3.5 .5" stroke="#777" stroke-width=".6" fill="none"/></svg>
<div class="t" style="left:456.5px;top:162px;font-size:4.6px;color:#444">None Selected</div>
<div class="t" style="left:356.5px;top:171.5px;font-size:4.8px;color:#333">Subsets and drawing sheets:</div>
<div class="a" style="left:356.2px;top:176.8px;width:195.5px;height:87px;background:#fff;border:1px solid #b8b8b8"></div>
<div class="a" style="left:545.3px;top:177.5px;width:6px;height:85.5px;background:#f0f0f0"></div>
<div class="a" style="left:546px;top:184.5px;width:4.6px;height:62px;background:#c8c8c8"></div>
<svg class="a" style="left:545.5px;top:178.5px" width="6" height="86"><path d="M1.5 4 L3 2.5 L4.5 4" stroke="#555" stroke-width=".6" fill="none"/><path d="M1.5 80.5 L3 82 L4.5 80.5" stroke="#555" stroke-width=".6" fill="none"/></svg>
<div class="a" style="left:380px;top:206.5px;width:165px;height:7px;background:#1c74d4"></div>
<svg class="a" style="left:356px;top:177px" width="190" height="87" viewBox="356 177 190 87">
 <g stroke="#aaa" stroke-width=".5" fill="none">
  <rect x="359" y="180" width="3" height="3"/><path d="M359.8 181.5 L361.2 181.5"/>
  <rect x="366" y="187" width="3" height="3"/><path d="M366.8 188.5 L368.2 188.5"/>
 </g>
 <g stroke="#888" stroke-width=".6" fill="none">
  <path d="M366.5 179 L366 179 L366 184.3 L366.5 184.3 M370.5 179 L371 179 L371 184.3 L370.5 184.3"/>
  <path d="M373.5 186 L373 186 L373 191.3 L373.5 191.3 M377.5 186 L378 186 L378 191.3 L377.5 191.3"/>
 </g>
 <path d="M373 179.5 L376 179.5 L377 180.5 L379.5 180.5 L379.5 184.5 L373 184.5 Z" fill="#1a5aa0"/>
 <rect x="380" y="185.5" width="6.3" height="6.3" fill="#2a8ad0"/><path d="M380 186.5 L385.3 191.8" stroke="#fff" stroke-width=".9"/><circle cx="385.6" cy="186.2" r="1.3" fill="#fff" stroke="#333" stroke-width=".5"/>
 <g fill="#333" font-family="Liberation Sans" font-size="4.6">
  <text x="382" y="183.3">DuplexDrawings</text>
  <text x="390" y="190.4">Architectural</text>
 </g>
 <g id="rows">
 </g>
</svg>
<!-- tree rows A01..E02 -->
<svg class="a" style="left:356px;top:177px" width="190" height="87" viewBox="356 177 190 87">
<g stroke="#b0b0b0" stroke-width=".6" fill="none">
<path d="M382 193.2 L381.3 193.2 L381.3 198.5 L382 198.5 M386 193.2 L386.7 193.2 L386.7 198.5 L386 198.5"/>
<path d="M382 214.79999999999998 L381.3 214.79999999999998 L381.3 220.1 L382 220.1 M386 214.79999999999998 L386.7 214.79999999999998 L386.7 220.1 L386 220.1"/>
<path d="M382 222.0 L381.3 222.0 L381.3 227.3 L382 227.3 M386 222.0 L386.7 222.0 L386.7 227.3 L386 227.3"/>
<path d="M382 229.2 L381.3 229.2 L381.3 234.5 L382 234.5 M386 229.2 L386.7 229.2 L386.7 234.5 L386 234.5"/>
<path d="M382 236.4 L381.3 236.4 L381.3 241.70000000000002 L382 241.70000000000002 M386 236.4 L386.7 236.4 L386.7 241.70000000000002 L386 241.70000000000002"/>
<path d="M382 243.6 L381.3 243.6 L381.3 248.9 L382 248.9 M386 243.6 L386.7 243.6 L386.7 248.9 L386 248.9"/>
<path d="M374.5 250.79999999999998 L373.8 250.79999999999998 L373.8 256.09999999999997 L374.5 256.09999999999997 M378.5 250.79999999999998 L379.2 250.79999999999998 L379.2 256.09999999999997 L378.5 256.09999999999997"/>
<path d="M374.5 258.0 L373.8 258.0 L373.8 263.29999999999995 L374.5 263.29999999999995 M378.5 258.0 L379.2 258.0 L379.2 263.29999999999995 L378.5 263.29999999999995"/>
</g>
<path d="M381.8 203 L383.3 204.5 L386 201" stroke="#444" stroke-width=".7" fill="none"/>
<rect x="381.3" y="207.8" width="4.8" height="4.8" fill="#fff"/>
<path d="M382 210.2 L383.3 211.5 L385.5 208.9" stroke="#1c74d4" stroke-width=".7" fill="none"/>
<path d="M389.3 192.9 L392.6 192.9 L394.6 194.9 L394.6 199.20000000000002 L389.3 199.20000000000002Z" fill="#fff" stroke="#335" stroke-width=".45"/>
<path d="M389.3 194.1 L394 199.20000000000002 L389.3 199.20000000000002Z" fill="#2a8ad0"/>
<path d="M389.3 200.10000000000002 L392.6 200.10000000000002 L394.6 202.10000000000002 L394.6 206.40000000000003 L389.3 206.40000000000003Z" fill="#fff" stroke="#335" stroke-width=".45"/>
<path d="M389.3 201.3 L394 206.40000000000003 L389.3 206.40000000000003Z" fill="#2a8ad0"/>
<path d="M389.3 207.3 L392.6 207.3 L394.6 209.3 L394.6 213.60000000000002 L389.3 213.60000000000002Z" fill="#d8e8f8" stroke="#335" stroke-width=".45"/>
<path d="M389.3 208.5 L394 213.60000000000002 L389.3 213.60000000000002Z" fill="#2a8ad0"/>
<path d="M389.3 214.5 L392.6 214.5 L394.6 216.5 L394.6 220.8 L389.3 220.8Z" fill="#fff" stroke="#335" stroke-width=".45"/>
<path d="M389.3 215.7 L394 220.8 L389.3 220.8Z" fill="#2a8ad0"/>
<path d="M389.3 221.70000000000002 L392.6 221.70000000000002 L394.6 223.70000000000002 L394.6 228.00000000000003 L389.3 228.00000000000003Z" fill="#fff" stroke="#335" stroke-width=".45"/>
<path d="M389.3 222.9 L394 228.00000000000003 L389.3 228.00000000000003Z" fill="#2a8ad0"/>
<path d="M389.3 228.9 L392.6 228.9 L394.6 230.9 L394.6 235.20000000000002 L389.3 235.20000000000002Z" fill="#fff" stroke="#335" stroke-width=".45"/>
<path d="M389.3 230.1 L394 235.20000000000002 L389.3 235.20000000000002Z" fill="#2a8ad0"/>
<path d="M389.3 236.10000000000002 L392.6 236.10000000000002 L394.6 238.10000000000002 L394.6 242.40000000000003 L389.3 242.40000000000003Z" fill="#fff" stroke="#335" stroke-width=".45"/>
<path d="M389.3 237.3 L394 242.40000000000003 L389.3 242.40000000000003Z" fill="#2a8ad0"/>
<path d="M389.3 243.3 L392.6 243.3 L394.6 245.3 L394.6 249.60000000000002 L389.3 249.60000000000002Z" fill="#fff" stroke="#335" stroke-width=".45"/>
<path d="M389.3 244.5 L394 249.60000000000002 L389.3 249.60000000000002Z" fill="#2a8ad0"/>
<rect x="381" y="250.39999999999998" width="6.3" height="6.3" fill="#2a8ad0"/><path d="M381 251.39999999999998 L386.3 256.7" stroke="#fff" stroke-width=".9"/><circle cx="386.6" cy="251.09999999999997" r="1.3" fill="#fff" stroke="#333" stroke-width=".5"/>
<rect x="381" y="257.59999999999997" width="6.3" height="6.3" fill="#2a8ad0"/><path d="M381 258.59999999999997 L386.3 263.9" stroke="#fff" stroke-width=".9"/><circle cx="386.6" cy="258.29999999999995" r="1.3" fill="#fff" stroke="#333" stroke-width=".5"/>
<g font-family="Liberation Sans" font-size="4.5">
<text x="398" y="197.6" fill="#444">A01 - Floor Plan - Ground</text>
<text x="398" y="204.8" fill="#444">A02 - Floor Plan - Second</text>
<text x="398" y="212" fill="#fff">A03 - Floor Plan - Second Room A/03</text>
<text x="398" y="219.2" fill="#444">A04 - Floor Plan - Second Room E/03</text>
<text x="398" y="226.4" fill="#444">A05 - Section 1</text>
<text x="398" y="233.6" fill="#444">A06 - Section 2</text>
<text x="398" y="240.8" fill="#444">E01 - Elevation 1</text>
<text x="398" y="248" fill="#444">E02 - Elevation 2</text>
<text x="390" y="255.2" fill="#444">Civil</text><text x="390" y="262.4" fill="#444">Electrical</text></g>
<path d="M384 215 L384 223 L386 221 L388 224 L388.8 223.5 L387 220.5 L389.5 220.5 Z" fill="#fff" stroke="#222" stroke-width=".5"/>
</svg>
<!-- buttons -->
<div class="a" style="left:463.3px;top:272px;width:29.2px;height:9px;background:#e2ecf6;border:1px solid #4a90d8"></div>
<div class="a" style="left:495.8px;top:272px;width:28.8px;height:9px;background:#e6e6e6;border:1px solid #c4c4c4"></div>
<div class="a" style="left:527.4px;top:272px;width:28.9px;height:9px;background:#e6e6e6;border:1px solid #c4c4c4"></div>
<svg class="a" style="left:463px;top:272px" width="94" height="10" viewBox="463 272 94 10">
 <path d="M471 277.8 L473 279.6 L477 275.3" stroke="#3aa03a" stroke-width="1.1" fill="none"/>
 <path d="M500 275 L504.5 280 M504.5 275 L500 280" stroke="#d02a2a" stroke-width="1.1"/>
 <rect x="533.5" y="275" width="5.5" height="5" fill="#4a7ac8"/><rect x="534.5" y="276" width="3.5" height="3" fill="#8ab4e8"/>
</svg>
<div class="t" style="left:479px;top:276.4px;font-size:4.6px;color:#333">OK</div>
<div class="t" style="left:507.3px;top:276.4px;font-size:4.6px;color:#333">Cancel</div>
<div class="t" style="left:541px;top:276.4px;font-size:4.6px;color:#333">Help</div>
<!-- ===== TOP: title + QAT + tabs ===== -->
<div class="a" style="left:20px;top:7px;width:757px;height:21.5px;background:#efeff1"></div>
<!-- logo -->
<div class="a" style="left:20px;top:7px;width:15px;height:21.5px;background:#f3f3f4;border-right:1px solid #e4e4e6"></div>
<svg class="a" style="left:21px;top:10px" width="13" height="12" viewBox="0 0 13 12">
 <path d="M1.5 3 L5 3 Q7.8 3 7.8 6.5 Q7.8 10 5 10 L2.5 10 Z" fill="#a8c878"/>
 <path d="M3.8 4.8 L5 4.8 Q6 4.8 6 6.5 Q6 8.2 5 8.2 L4 8.2 Z" fill="#e8f0e0"/>
 <path d="M8.5 1.5 L12 10.5 L7.5 10.5 Z" fill="#a8bcd4" opacity=".85"/>
</svg>
<!-- workspace combo -->
<div class="a" style="left:36px;top:8px;width:72px;height:9px;background:#fff;border:1px solid #c4c4c4"></div>
<div class="a" style="left:102px;top:9px;width:5px;height:7px;background:#e6e6e6;border-left:1px solid #ccc"></div>
<div class="t" style="left:38px;top:10px;font-size:5px;color:#333">Drafting and Annotation</div>
<svg class="a" style="left:103px;top:11px" width="4" height="3"><path d="M0.5 0.5 L2 2 L3.5 0.5" stroke="#666" stroke-width=".7" fill="none"/></svg>
<!-- QAT icons -->
<svg class="a" style="left:108px;top:8px" width="90" height="10" viewBox="0 0 90 10">
 <path d="M2.5 1.5 L5.5 1.5 L7.5 3.5 L7.5 7.5 L2.5 7.5 Z" fill="#fafafa" stroke="#555" stroke-width=".7"/>
 <path d="M7 6.5 L9 6.5 M8 5.5 L8 7.5" stroke="#555" stroke-width=".5"/>
 <path d="M13 4 L19 4 L18.5 7.8 L13 7.8 Z" fill="#e8b030"/>
 <path d="M15.5 1.5 L17 1.5 L17 4 L15.5 4Z" fill="#4aa04a"/><path d="M14.5 2.3 L16.25 0.8 L18 2.3Z" fill="#4aa04a"/>
 <path d="M24 2.5 L30 2.5 L30 7.8 L24 7.8 Z" fill="#1e5a96"/>
 <path d="M26 4 L30 4 L30 7.8 L26 7.8Z" fill="#2a70b8"/><path d="M27.5 1.2 L30 1.2 L30 3.2 L27.5 3.2Z" fill="#4aa04a"/>
 <path d="M35 1.5 L41 1.5 L41 7.8 L35 7.8 Z" fill="#3a9ae0"/>
 <path d="M36.5 1.5 L39.5 1.5 L39.5 4 L36.5 4Z" fill="#fff"/><path d="M36.5 5.5 L39.5 5.5 L39.5 7.8 L36.5 7.8Z" fill="#c8e4f8"/>
 <path d="M45 4 L51 4 L51 7 L45 7 Z" fill="#555"/>
 <path d="M46.5 2.5 L49.5 2.5 L49.5 4 L46.5 4Z" fill="#888"/><path d="M46.5 6 L49.5 6 L49.5 7.6 L46.5 7.6Z" fill="#999"/>
 <path d="M56.5 6 Q56.5 3 59 3 Q61 3 61 5.5" stroke="#c4c4c4" stroke-width=".8" fill="none"/>
 <path d="M63.8 4.3 L64.6 5.1 L65.4 4.3" stroke="#666" stroke-width=".6" fill="none"/>
 <path d="M72.5 5.5 Q72.5 3 75 3 Q77 3 77 6" stroke="#d0d0d0" stroke-width=".8" fill="none"/>
 <path d="M79.5 4.3 L80.3 5.1 L81.1 4.3" stroke="#666" stroke-width=".6" fill="none"/>
 <path d="M84.5 3.5 L86 3.5 M84.5 4.8 L85.25 5.8 L86 4.8" stroke="#444" stroke-width=".6" fill="none"/>
</svg>
<div class="t" style="left:304.5px;top:9.4px;font-size:6.2px;color:#606060">DraftSight Premium</div>
<!-- window controls -->
<svg class="a" style="left:730px;top:8px" width="48" height="20" viewBox="0 0 48 20">
 <path d="M25 3.5 L28 3.5" stroke="#333" stroke-width="1"/>
 <rect x="34.5" y="2.5" width="2.5" height="2.5" fill="none" stroke="#444" stroke-width=".7"/>
 <rect x="35.5" y="1.5" width="2.5" height="2.5" fill="none" stroke="#444" stroke-width=".7"/>
 <path d="M42.5 2 L45.5 5 M45.5 2 L42.5 5" stroke="#333" stroke-width=".9"/>
 <path d="M6 15 Q5 13.5 7 14 Q9 13.5 8 15 L7 16 Z" fill="none" stroke="#aaa" stroke-width=".6"/>
 <path d="M15 14.5 Q15 13.5 16 13.5 Q17 13.5 17 14.5 Q17 15.3 16 15.6 L16 16.3 M16 17 L16 17.4" stroke="#555" stroke-width=".6" fill="none"/>
 <path d="M23 15 L24 15.8 L25 15" stroke="#444" stroke-width=".7" fill="none"/>
 <path d="M28 17 L32 17" stroke="#222" stroke-width="1"/>
 <rect x="36" y="14.5" width="2.5" height="2.5" fill="none" stroke="#444" stroke-width=".7"/>
 <rect x="37" y="13.5" width="2.5" height="2.5" fill="none" stroke="#444" stroke-width=".7"/>
 <path d="M43.5 14 L46.5 17 M46.5 14 L43.5 17" stroke="#333" stroke-width=".9"/>
</svg>
<!-- ribbon tabs -->
<div class="a" style="left:36px;top:19.7px;width:21.3px;height:9.8px;background:#fcfcfd;border:1px solid #e0e0e2;border-bottom:none"></div>
<div class="t" style="left:40px;top:21.8px;font-size:5px;color:#555">Home</div>
<div class="t" style="left:62px;top:21.8px;font-size:5px;color:#444">Insert</div>
<div class="t" style="left:82px;top:21.8px;font-size:5px;color:#444">Annotate</div>
<div class="t" style="left:110px;top:21.8px;font-size:5px;color:#444">Sheet</div>
<div class="t" style="left:130px;top:21.8px;font-size:5px;color:#444">Constraints</div>
<div class="t" style="left:163px;top:21.8px;font-size:5px;color:#444">Manage</div>
<div class="t" style="left:188px;top:21.8px;font-size:5px;color:#444">View</div>
<div class="t" style="left:207px;top:21.8px;font-size:5px;color:#444">Powertools</div>
<div class="t" style="left:239px;top:21.8px;font-size:5px;color:#444">Mechanical</div>
<div class="t" style="left:271.5px;top:21.8px;font-size:5px;color:#444">Add-ins</div>
</body></html>
